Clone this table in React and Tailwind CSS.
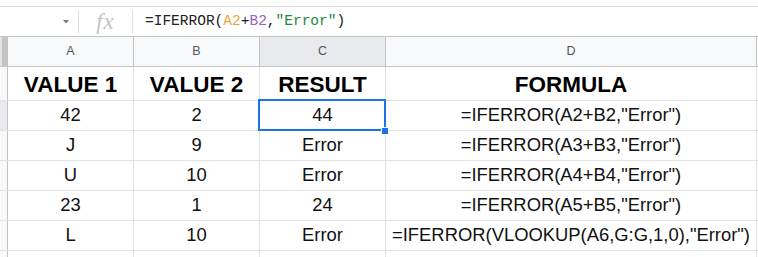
import React from "react";

const rows = [
  ["42", "2", "44", '=IFERROR(A2+B2,"Error")'],
  ["J", "9", "Error", '=IFERROR(A3+B3,"Error")'],
  ["U", "10", "Error", '=IFERROR(A4+B4,"Error")'],
  ["23", "1", "24", '=IFERROR(A5+B5,"Error")'],
  ["L", "10", "Error", '=IFERROR(VLOOKUP(A6,G:G,1,0),"Error")'],
];

function Cell({ w, children, selected, header }) {
  return (
    <div
      className={`${w} relative shrink-0 border-r border-[#e2e2e2] flex items-end justify-center ${
        header ? "pb-[4px]" : "pb-[6px]"
      }`}
    >
      <span className="leading-none whitespace-nowrap">{children}</span>
      {selected && (
        <>
          <div className="absolute left-[-2px] top-[-2px] right-[-1px] bottom-[-1px] border-2 border-[#1a73e8] z-10" />
          <div className="absolute right-[-4px] bottom-[-5px] w-[8px] h-[8px] bg-[#1a73e8] border border-white z-20" />
        </>
      )}
    </div>
  );
}

export default function App() {
  return (
    <div className="w-[758px] h-[257px] bg-white overflow-hidden font-['Liberation_Sans',Arial,sans-serif] text-[#111]">
      <div className="h-[6px]" />
      {/* formula bar */}
      <div className="h-[30px] border-t border-[#e0e0e0] flex items-center">
        <div className="w-[78px] h-full flex items-center justify-end pr-[9px]">
          <svg width="6" height="4" viewBox="0 0 6 4">
            <path d="M0 0 L6 0 L3 3.5 Z" fill="#777" />
          </svg>
        </div>
        <div className="w-px h-[23px] bg-[#e0e0e0]" />
        <div className="w-[53px] h-full flex items-center justify-center">
          <span className="font-['Liberation_Serif',serif] italic text-[23px] text-[#c4c4c4] leading-none tracking-[1px]">
            fx
          </span>
        </div>
        <div className="w-px h-[23px] bg-[#e0e0e0]" />
        <div className="pl-[12px] font-['Liberation_Mono',monospace] text-[14.5px] leading-none text-[#222] whitespace-nowrap">
          =IFERROR(<span className="text-[#e8a33d]">A2</span>+
          <span className="text-[#9e5cc2]">B2</span>,
          <span className="text-[#1e8a3c]">"Error"</span>)
        </div>
      </div>
      {/* column header */}
      <div className="h-[31px] flex border-t border-b border-[#c4c4c4] text-[12.5px] text-[#555]">
        <div className="w-[8px] shrink-0 flex border-r border-[#c4c4c4] bg-[#d6d6d6]">
          <div className="w-[2px] bg-[#e4e4e4]" />
          <div className="flex-1 bg-[#c4c4c4]" />
        </div>
        <div className="w-[126px] shrink-0 bg-[#f8f9fa] border-r border-[#c4c4c4] flex items-center justify-center">A</div>
        <div className="w-[126px] shrink-0 bg-[#f8f9fa] border-r border-[#c4c4c4] flex items-center justify-center">B</div>
        <div className="w-[126px] shrink-0 bg-[#e8eaed] border-r border-[#c4c4c4] flex items-center justify-center">C</div>
        <div className="w-[371px] shrink-0 bg-[#f8f9fa] border-r border-[#c4c4c4] flex items-center justify-center">D</div>
        <div className="flex-1 bg-[#f8f9fa]" />
      </div>
      {/* header data row */}
      <div className="h-[34px] flex border-b border-[#e2e2e2] font-bold text-[22.5px] text-black">
        <div className="w-[8px] shrink-0 bg-[#f8f9fa] border-r border-[#c4c4c4]" />
        <Cell w="w-[126px]" header>VALUE 1</Cell>
        <Cell w="w-[126px]" header>VALUE 2</Cell>
        <Cell w="w-[126px]" header>RESULT</Cell>
        <Cell w="w-[371px]" header>FORMULA</Cell>
        <div className="flex-1" />
      </div>
      {rows.map((r, i) => (
        <div key={i} className="h-[30px] flex border-b border-[#e2e2e2] text-[18.4px]">
          <div
            className={`w-[8px] shrink-0 border-r border-[#c4c4c4] ${
              i === 0 ? "bg-[#e8eaed]" : "bg-[#f8f9fa]"
            }`}
          />
          <Cell w="w-[126px]">{r[0]}</Cell>
          <Cell w="w-[126px]">{r[1]}</Cell>
          <Cell w="w-[126px]" selected={i === 0}>{r[2]}</Cell>
          <Cell w="w-[371px]">{r[3]}</Cell>
          <div className="flex-1" />
        </div>
      ))}
      <div className="h-[30px] flex">
        <div className="w-[8px] shrink-0 bg-[#f8f9fa] border-r border-[#c4c4c4]" />
        <div className="w-[126px] shrink-0 border-r border-[#e2e2e2]" />
        <div className="w-[126px] shrink-0 border-r border-[#e2e2e2]" />
        <div className="w-[126px] shrink-0 border-r border-[#e2e2e2]" />
        <div className="w-[371px] shrink-0 border-r border-[#e2e2e2]" />
      </div>
    </div>
  );
}
